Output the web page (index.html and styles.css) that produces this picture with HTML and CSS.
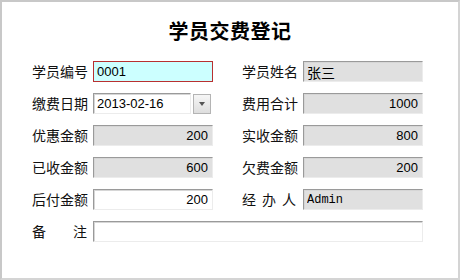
FILE: index.html
```html
<!DOCTYPE html>
<html lang="zh-CN">
<head>
  <meta charset="UTF-8">
  <title>学员交费登记</title>
  <link rel="stylesheet" href="styles.css">
</head>
<body>
  <div class="panel">
    <h1 class="title">学员交费登记</h1>

    <div class="form">
      <label class="label">学员编号</label>
      <input class="field field-active" type="text" value="0001">
      <label class="label label-right">学员姓名</label>
      <input class="field readonly cjk" type="text" value="张三" readonly>

      <label class="label">缴费日期</label>
      <div class="date-box">
        <input class="field date-input" type="text" value="2013-02-16">
        <span class="drop-btn">
          <svg width="6" height="4" viewBox="0 0 6 4"><path d="M0 0h6L3 4z" fill="#555"/></svg>
        </span>
      </div>
      <label class="label label-right">费用合计</label>
      <input class="field readonly num" type="text" value="1000" readonly>

      <label class="label">优惠金额</label>
      <input class="field readonly num" type="text" value="200" readonly>
      <label class="label label-right">实收金额</label>
      <input class="field readonly num" type="text" value="800" readonly>

      <label class="label">已收金额</label>
      <input class="field readonly num" type="text" value="600" readonly>
      <label class="label label-right">欠费金额</label>
      <input class="field readonly num" type="text" value="200" readonly>

      <label class="label">后付金额</label>
      <input class="field num" type="text" value="200">
      <label class="label label-right label-spaced">经办人</label>
      <input class="field readonly mono" type="text" value="Admin" readonly>

      <label class="label label-wide">备注</label>
      <input class="field remark" type="text" value="">
    </div>
  </div>
</body>
</html>
```

FILE: styles.css
```css
body {
  margin: 0;
  background-color: #ffffff;
  font-family: "Noto Sans CJK SC", "Liberation Sans", sans-serif;
}
.panel {
  width: 460px;
  height: 280px;
  box-sizing: border-box;
  border: 2px solid #d4d4d4;
  border-top-color: #c8c8c8;
  border-left-color: #c8c8c8;
  padding-top: 17px;
  background-color: #ffffff;
}
.title {
  margin: 0;
  text-align: center;
  font-size: 20px;
  line-height: 24px;
  font-weight: bold;
  letter-spacing: 0.5px;
  color: #000;
}
.form {
  display: grid;
  grid-template-columns: 61px 120px 90px 120px;
  grid-auto-rows: 21px;
  row-gap: 11px;
  margin-top: 18px;
  margin-left: 30px;
  align-items: center;
}
.label {
  font-size: 14px;
  line-height: 21px;
  color: #111;
  white-space: nowrap;
}
.label-right {
  padding-left: 29px;
}
.label-spaced {
  letter-spacing: 6px;
}
.label-wide {
  letter-spacing: 27px;
}
.field {
  box-sizing: border-box;
  width: 120px;
  height: 21px;
  margin: 0;
  padding: 0 4px 0 3px;
  border: 1px solid;
  border-color: #9a9a9a #ececec #ececec #9a9a9a;
  box-shadow: inset 1px 1px 0 #d6d6d6;
  background-color: #ffffff;
  font-family: "Liberation Sans", sans-serif;
  font-size: 13px;
  color: #000;
  outline: none;
}
.field.readonly {
  background-color: #e0e0e0;
}
.field-active {
  border-color: #b83030;
  box-shadow: none;
  background-color: #ccffff;
}
.cjk {
  font-family: "Noto Sans CJK SC", sans-serif;
  font-size: 14px;
}
.num {
  text-align: right;
}
.mono {
  font-family: "Liberation Mono", monospace;
  font-size: 12px;
}
.date-box {
  display: flex;
  align-items: center;
  gap: 2px;
  width: 120px;
}
.date-input {
  width: 98px;
}
.drop-btn {
  display: flex;
  align-items: center;
  justify-content: center;
  box-sizing: border-box;
  width: 18px;
  height: 20px;
  border: 1px solid #b4b4b4;
  background: linear-gradient(#f6f6f6, #dedede);
}
.remark {
  grid-column: 2 / 5;
  width: 330px;
}
```
